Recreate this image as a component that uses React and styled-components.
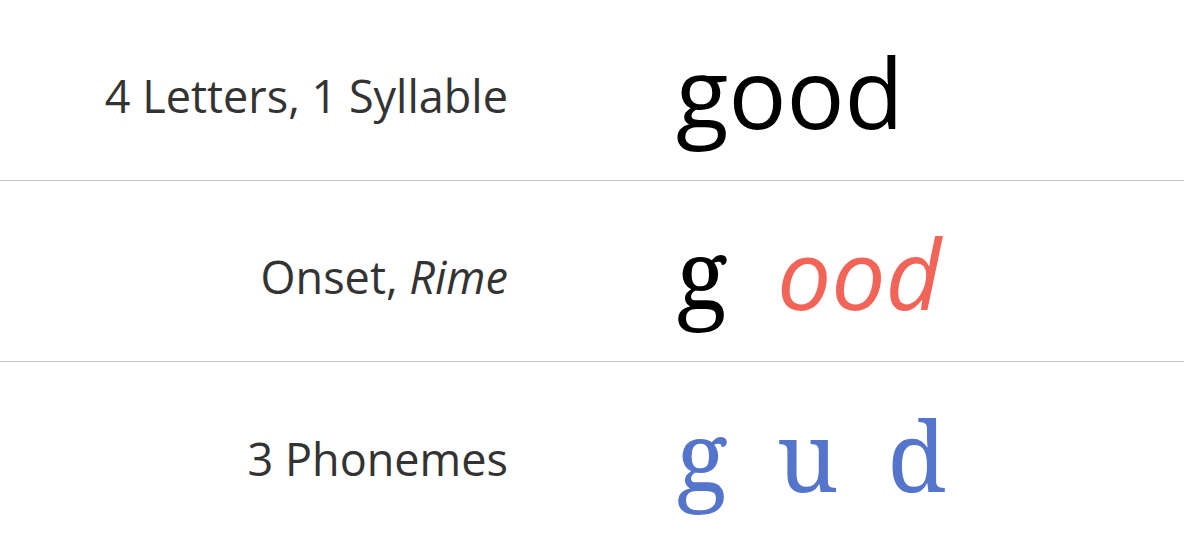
import React from "react";
import styled, { createGlobalStyle } from "styled-components";

const Global = createGlobalStyle`
  html, body { margin: 0; padding: 0; background: #fff; }
  body { font-family: "Open Sans", "Noto Sans", sans-serif; }
`;

const Table = styled.div`
  width: 1184px;
  display: flex;
  flex-direction: column;
`;

const Row = styled.div`
  display: grid;
  grid-template-columns: 1fr 1fr;
  column-gap: 168px;
  align-items: center;
  height: 181px;
  border-bottom: ${(p) => (p.$last ? "none" : "1px solid #c6c6c6")};
  box-sizing: border-box;
`;

const Label = styled.div`
  text-align: right;
  font-family: "Open Sans", sans-serif;
  font-size: 45px;
  color: #333333;
  line-height: 1;
  padding-top: 11px;
`;

const Em = styled.em`
  font-style: italic;
`;

const Word = styled.div`
  display: flex;
  align-items: baseline;
  gap: ${(p) => p.$gap || 0}px;
  font-size: 96.5px;
  line-height: 1;
  padding-top: 5px;
`;

const Sans = styled.span`
  font-family: "Open Sans", sans-serif;
  font-style: ${(p) => (p.$italic ? "italic" : "normal")};
  color: ${(p) => p.$color || "#000"};
`;

const Serif = styled.span`
  font-family: "Noto Serif", "Droid Serif", "DejaVu Serif", serif;
  color: ${(p) => p.$color || "#000"};
`;

const BLUE = "#5574cc";
const RED = "#f26458";

export default function App() {
  return (
    <>
      <Global />
      <Table>
        <Row>
          <Label>4 Letters, 1 Syllable</Label>
          <Word>
            <Sans>good</Sans>
          </Word>
        </Row>
        <Row>
          <Label>
            Onset, <Em>Rime</Em>
          </Label>
          <Word $gap={49}>
            <Serif>g</Serif>
            <Sans $italic $color={RED}>ood</Sans>
          </Word>
        </Row>
        <Row $last>
          <Label>3 Phonemes</Label>
          <Word $gap={49}>
            <Serif $color={BLUE}>g</Serif>
            <Serif $color={BLUE}>u</Serif>
            <Serif $color={BLUE}>d</Serif>
          </Word>
        </Row>
      </Table>
    </>
  );
}
